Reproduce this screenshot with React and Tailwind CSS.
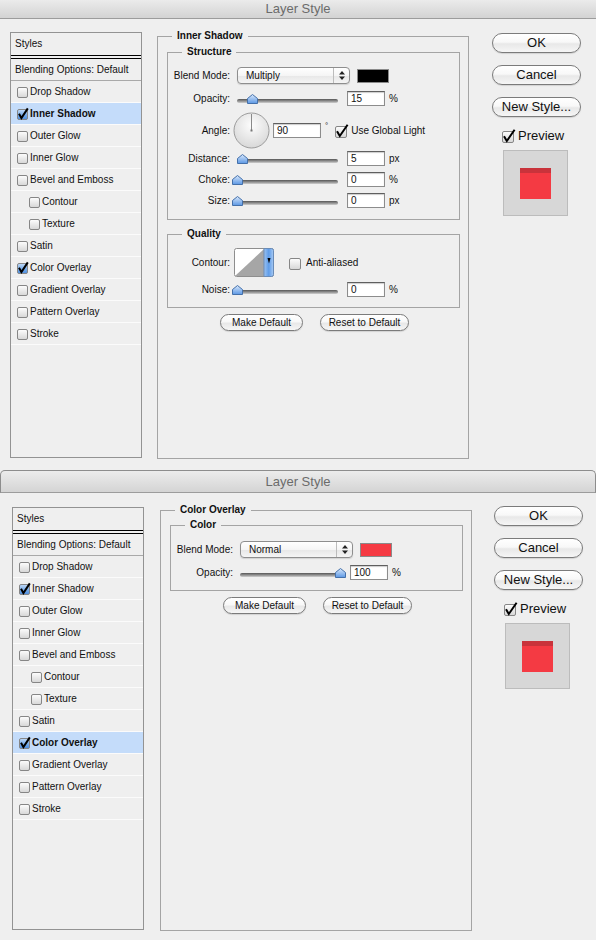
import React from 'react';

const styleRows = [
  { label: 'Drop Shadow' },
  { label: 'Inner Shadow' },
  { label: 'Outer Glow' },
  { label: 'Inner Glow' },
  { label: 'Bevel and Emboss' },
  { label: 'Contour', indent: true },
  { label: 'Texture', indent: true },
  { label: 'Satin' },
  { label: 'Color Overlay' },
  { label: 'Gradient Overlay' },
  { label: 'Pattern Overlay' },
  { label: 'Stroke' },
];

const pill =
  'flex items-center justify-center rounded-full border border-[#7b7b7b] bg-[linear-gradient(#ffffff,#f8f8f8_45%,#e8e8e8_55%,#f6f6f6)] shadow-[0_1px_1px_rgba(0,0,0,0.12)]';

// shared gradients for the little svg controls
const Defs = () => (
  <svg width="0" height="0" className="absolute">
    <defs>
      <linearGradient id="cbWhite" x1="0" y1="0" x2="0" y2="1">
        <stop offset="0" stopColor="#fefefe" />
        <stop offset="1" stopColor="#d6d6d6" />
      </linearGradient>
      <linearGradient id="cbBlue" x1="0" y1="0" x2="0" y2="1">
        <stop offset="0" stopColor="#c3dbf7" />
        <stop offset="0.5" stopColor="#7eb0ea" />
        <stop offset="1" stopColor="#4a8ce0" />
      </linearGradient>
      <linearGradient id="thumbGrad" x1="0" y1="0" x2="0" y2="1">
        <stop offset="0" stopColor="#d9e8fb" />
        <stop offset="1" stopColor="#5b97e4" />
      </linearGradient>
      <linearGradient id="contourBtn" x1="0" y1="0" x2="1" y2="0">
        <stop offset="0" stopColor="#9cc3f2" />
        <stop offset="0.5" stopColor="#5f9ce8" />
        <stop offset="1" stopColor="#a9cbf4" />
      </linearGradient>
      <radialGradient id="dialFill" cx="0.5" cy="0.35" r="0.65">
        <stop offset="0" stopColor="#fdfdfd" />
        <stop offset="1" stopColor="#d8d8d8" />
      </radialGradient>
    </defs>
  </svg>
);

function CheckBox({ on, blue, big }) {
  const s = big ? 11 : 10;
  const w = big ? 14 : 13;
  const tick = big ? 'M2 7.2 L4.8 12 L12.6 0.8' : 'M2 6.8 L4.4 11 L10.8 1.4';
  return (
    <svg width={w} height={s + 3} viewBox={`0 0 ${w} ${s + 3}`} className="shrink-0">
      <rect
        x="0.5"
        y="2.5"
        width={s}
        height={s}
        rx="1.5"
        fill={on && blue ? 'url(#cbBlue)' : 'url(#cbWhite)'}
        stroke="#868686"
      />
      {on && <path d={tick} fill="none" stroke="#000" strokeWidth="2" />}
    </svg>
  );
}

function StylesList({ selected, className }) {
  const checked = ['Inner Shadow', 'Color Overlay'];
  return (
    <div className={`flex w-[132px] flex-col border border-[#939393] ${className}`}>
      <div className="flex h-[23px] items-center border-b border-black pl-[4px]">Styles</div>
      <div className="mt-[2px] flex h-[23px] items-center border-y border-t-black border-b-[#a9a9a9] pl-[4px]">
        Blending Options: Default
      </div>
      {styleRows.map((r) => {
        const isSel = r.label === selected;
        return (
          <div
            key={r.label}
            className={`flex h-[22px] items-center border-b border-[#fbfbfb] ${
              r.indent ? 'pl-[18px]' : 'pl-[6px]'
            } ${isSel ? 'bg-[#c4dcfa] font-bold' : ''}`}
          >
            <CheckBox on={checked.includes(r.label)} blue />
            <span>{r.label}</span>
          </div>
        );
      })}
    </div>
  );
}

function Group({ title, className, children }) {
  return (
    <fieldset className={`min-w-0 border border-[#a4a4a4] ${className}`}>
      <legend className="ml-[14px] px-[5px] text-[10px] font-bold leading-[12px]">{title}</legend>
      {children}
    </fieldset>
  );
}

const Label = ({ children }) => (
  <span className="w-[62px] shrink-0 text-right">{children}</span>
);

const Field = ({ children, className = 'w-[38px]' }) => (
  <div
    className={`h-[15px] border border-[#8c8c8c] border-t-[#5f5f5f] bg-white pl-[3px] text-[10px] leading-[13px] shadow-[inset_0_1px_1px_rgba(0,0,0,0.2)] ${className}`}
  >
    {children}
  </div>
);

function Select({ value }) {
  return (
    <div className="ml-[7px] flex h-[17px] w-[113px] items-center rounded-[4px] border border-[#8e8e8e] bg-[linear-gradient(#ffffff,#f5f5f5_50%,#e7e7e7_52%,#f5f5f5)] pl-[8px] shadow-[0_1px_1px_rgba(0,0,0,0.12)]">
      <span>{value}</span>
      <div className="ml-auto flex h-full w-[16px] items-center justify-center border-l border-[#bcbcbc]">
        <svg width="6" height="9" viewBox="0 0 6 9">
          <path d="M3 0 L6 3.5 H0 Z M0 5.5 H6 L3 9 Z" fill="#222" />
        </svg>
      </div>
    </div>
  );
}

function Slider({ value }) {
  return (
    <div className="relative ml-[7px] h-[10px] w-[101px] shrink-0">
      <div className="absolute inset-x-0 top-[5px] h-[4px] rounded-full bg-[linear-gradient(#555555,#9a9a9a_60%,#d0d0d0)]" />
      <svg
        width="11"
        height="10"
        viewBox="0 0 11 10"
        className="absolute top-0"
        style={{ left: `${value - 5.5}px` }}
      >
        <path d="M5.5 0.5 L10.5 4.5 V9.5 H0.5 V4.5 Z" fill="url(#thumbGrad)" stroke="#4470aa" />
      </svg>
    </div>
  );
}

function SliderRow({ label, value, unit, className = '' }) {
  return (
    <div className={`flex h-[15px] items-center ${className}`}>
      <Label>{label}</Label>
      <Slider value={value} />
      <Field className="ml-[9px] w-[38px]">{value}</Field>
      <span className="ml-[4px]">{unit}</span>
    </div>
  );
}

const Dial = () => (
  <svg width="37" height="37" viewBox="0 0 37 37" className="ml-[3px] shrink-0">
    <circle cx="18.5" cy="18.5" r="17.5" fill="url(#dialFill)" stroke="#9c9c9c" />
    <line x1="18.5" y1="18.5" x2="18.5" y2="2" stroke="#8a8a8a" />
    <rect x="17.5" y="17.5" width="2" height="2" fill="#777" />
  </svg>
);

const ContourPicker = () => (
  <svg width="40" height="29" viewBox="0 0 40 29" className="ml-[4px] shrink-0">
    <rect x="0.5" y="0.5" width="39" height="28" rx="2" fill="#fff" stroke="#8e8e8e" />
    <path d="M1 28 L30 1 V28 Z" fill="#a6a6a6" />
    <path
      d="M30 0.5 H37.5 A2 2 0 0 1 39.5 2.5 V26.5 A2 2 0 0 1 37.5 28.5 H30 Z"
      fill="url(#contourBtn)"
      stroke="#6a8cb8"
    />
    <path d="M33.5 10 H36.5 L35 15.5 Z" fill="#000" />
  </svg>
);

function InnerShadowPanel() {
  return (
    <Group title="Inner Shadow" className="mt-[11px] h-[429px] w-[312px]">
      <div className="flex flex-col pl-[9px] pr-[8px]">
        <Group title="Structure" className="mt-[4px]">
          <div className="flex flex-col pt-[9px] pb-[11px]">
            <div className="flex h-[17px] items-center">
              <Label>Blend Mode:</Label>
              <Select value="Multiply" />
              <div className="ml-[7px] h-[14px] w-[32px] border border-[#8a8a8a] bg-black" />
            </div>
            <SliderRow label="Opacity:" value={15} unit="%" className="mt-[7px]" />
            <div className="mt-[6px] flex h-[37px] items-center">
              <Label>Angle:</Label>
              <Dial />
              <Field className="ml-[3px] w-[48px]">90</Field>
              <span className="ml-[4px] mb-[10px] text-[8px]">°</span>
              <div className="ml-[7px]">
                <CheckBox on big />
              </div>
              <span className="ml-[2px]">Use Global Light</span>
            </div>
            <SliderRow label="Distance:" value={5} unit="px" className="mt-[2px]" />
            <SliderRow label="Choke:" value={0} unit="%" className="mt-[6px]" />
            <SliderRow label="Size:" value={0} unit="px" className="mt-[6px]" />
          </div>
        </Group>
        <Group title="Quality" className="mt-[8px]">
          <div className="flex flex-col pt-[8px] pb-[10px]">
            <div className="flex h-[29px] items-center">
              <Label>Contour:</Label>
              <ContourPicker />
              <div className="ml-[15px]">
                <CheckBox big />
              </div>
              <span className="ml-[3px]">Anti-aliased</span>
            </div>
            <SliderRow label="Noise:" value={0} unit="%" className="mt-[5px]" />
          </div>
        </Group>
        <DefaultButtons />
      </div>
    </Group>
  );
}

function ColorOverlayPanel() {
  return (
    <Group title="Color Overlay" className="mt-[11px] h-[427px] w-[312px]">
      <div className="flex flex-col pl-[9px] pr-[8px]">
        <Group title="Color" className="mt-[3px]">
          <div className="flex flex-col pt-[10px] pb-[10px]">
            <div className="flex h-[17px] items-center">
              <Label>Blend Mode:</Label>
              <Select value="Normal" />
              <div className="ml-[7px] h-[14px] w-[32px] border border-[#8a8a8a] bg-[#f53a43]" />
            </div>
            <SliderRow label="Opacity:" value={100} unit="%" className="mt-[7px]" />
          </div>
        </Group>
        <DefaultButtons />
      </div>
    </Group>
  );
}

const DefaultButtons = () => (
  <div className="mt-[6px] flex justify-center gap-[17px] pl-[2px]">
    <div className={`${pill} h-[17px] w-[83px]`}>Make Default</div>
    <div className={`${pill} h-[17px] w-[89px]`}>Reset to Default</div>
  </div>
);

function SideColumn({ className }) {
  return (
    <div className={`flex w-[89px] shrink-0 flex-col text-[13px] ${className}`}>
      <div className={`${pill} h-[20px]`}>OK</div>
      <div className={`${pill} mt-[12px] h-[20px]`}>Cancel</div>
      <div className={`${pill} mt-[12px] h-[20px]`}>New Style...</div>
      <div className="mt-[12px] flex h-[14px] items-center pl-[10px]">
        <CheckBox on big />
        <span className="ml-[2px]">Preview</span>
      </div>
      <div className="ml-[11px] mt-[7px] h-[66px] w-[65px] border border-[#bcbcbc] bg-[#d7d7d7] pl-[16px] pt-[17px]">
        <div className="h-[31px] w-[31px] border-t-[5px] border-t-[#c9333b] bg-[#f43a43]" />
      </div>
    </div>
  );
}

export default function App() {
  return (
    <div className="h-[940px] w-[596px] overflow-hidden bg-[#efefef] font-['Liberation_Sans',Arial,sans-serif] text-[10px] leading-[12px] text-[#111]">
      <Defs />
      {/* first dialog: Inner Shadow selected */}
      <div className="flex h-[19px] items-center justify-center border-b border-[#9c9c9c] bg-[linear-gradient(#ebebeb,#d3d3d3)] text-[13px] text-[#6b6b6b]">
        Layer Style
      </div>
      <div className="flex h-[451px] items-start pl-[10px]">
        <StylesList selected="Inner Shadow" className="mt-[13px] h-[426px]" />
        <div className="ml-[15px]">
          <InnerShadowPanel />
        </div>
        <SideColumn className="ml-[23px] mt-[14px]" />
      </div>

      {/* second dialog: Color Overlay selected */}
      <div className="flex h-[23px] items-center justify-center rounded-t-[5px] border border-[#8d8d8d] border-b-[#9c9c9c] bg-[linear-gradient(#ececec,#d4d4d4)] text-[13px] text-[#6b6b6b]">
        Layer Style
      </div>
      <div className="flex h-[447px] items-start pl-[12px]">
        <StylesList selected="Color Overlay" className="mt-[14px] h-[423px]" />
        <div className="ml-[16px]">
          <ColorOverlayPanel />
        </div>
        <SideColumn className="ml-[22px] mt-[13px]" />
      </div>
    </div>
  );
}
